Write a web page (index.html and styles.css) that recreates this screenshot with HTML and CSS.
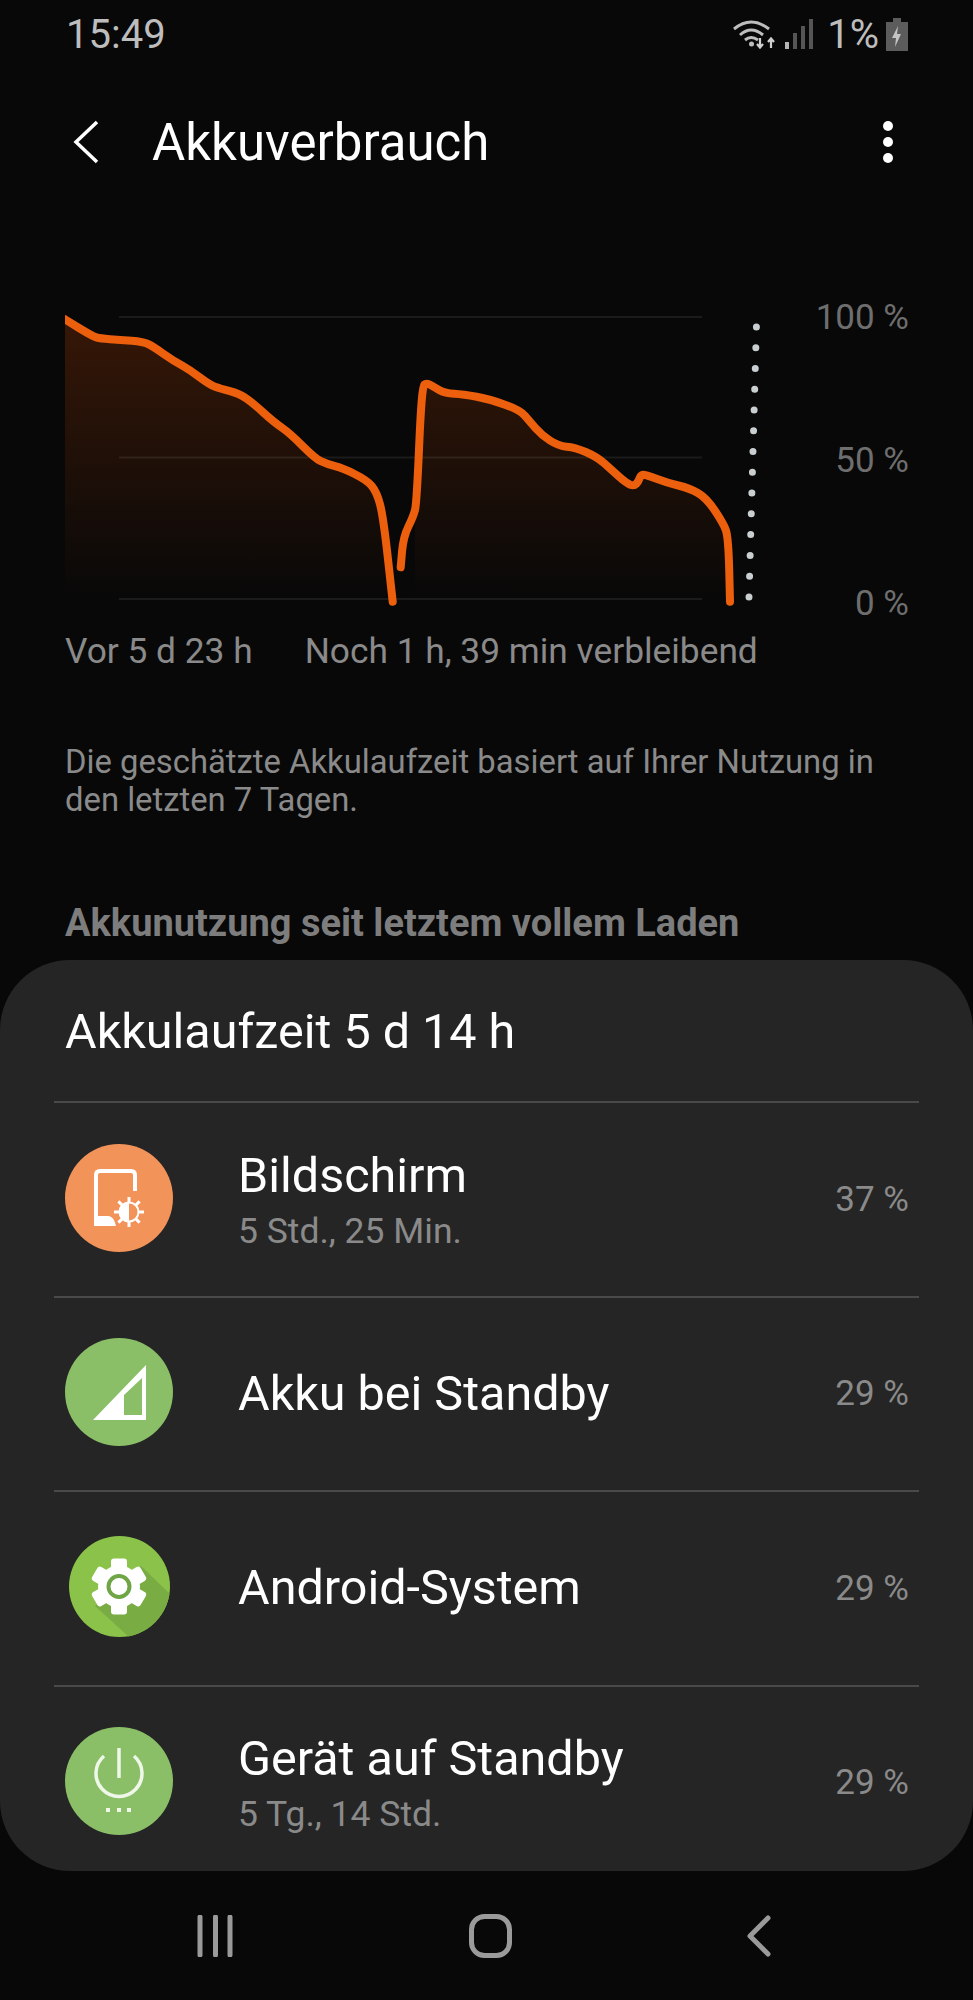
FILE: index.html
```html
<!DOCTYPE html>
<html lang="de">
<head>
<meta charset="UTF-8">
<title>Akkuverbrauch</title>
<link rel="stylesheet" href="styles.css">
</head>
<body>

<div class="statusbar">
  <span class="uhrzeit">15:49</span>
  <div class="status-rechts">
    <svg class="ic-wifi" width="46" height="32" viewBox="0 0 46 32">
      <g fill="none" stroke="#bdbdbd" stroke-width="3">
        <path d="M1 11 Q18 -3 36 11"/>
        <path d="M7 17 Q18 7 30 17"/>
        <path d="M12 22 Q18 17 25 22"/>
      </g>
      <circle cx="18.500" cy="26" r="2.500" fill="#bdbdbd"/>
      <path d="M27 20v9M24 26l3 3.500 3-3.500M38 30v-9M35 24l3-3.500 3 3.500" fill="none" stroke="#d0d0d0" stroke-width="2.200"/>
    </svg>
    <svg class="ic-signal" width="30" height="32" viewBox="0 0 30 32">
      <rect x="1" y="24" width="4" height="7" fill="#b5b5b5"/>
      <rect x="9" y="15" width="4" height="16" fill="#555"/>
      <rect x="17" y="8" width="4" height="23" fill="#555"/>
      <rect x="25" y="1" width="4" height="30" fill="#555"/>
    </svg>
    <span class="akku-text">1%</span>
    <svg class="ic-akku" width="22" height="33" viewBox="0 0 22 33">
      <path d="M7 0h8v4h7v29H0V4h7z" fill="#5c5c5c"/>
      <path d="M12 8l-6 12h4l-1 9 6-13h-4z" fill="#c4c4c4"/>
    </svg>
  </div>
</div>

<div class="toolbar">
  <svg class="zurueck" width="28" height="44" viewBox="0 0 28 44">
    <path d="M25 2 L4 22 L25 42" fill="none" stroke="#fff" stroke-width="3.500"/>
  </svg>
  <h1>Akkuverbrauch</h1>
  <div class="menu"><i></i><i></i><i></i></div>
</div>

<div class="grafik">
  <!-- viewBox usa as coordenadas da tela -->
  <svg class="kurve" width="700" height="320" viewBox="65 300 700 320">
    <defs>
      <linearGradient id="flaeche" gradientUnits="userSpaceOnUse" x1="0" y1="320" x2="0" y2="600">
        <stop offset="0" stop-color="#361707"/>
        <stop offset="1" stop-color="#080808"/>
      </linearGradient>
    </defs>
    <path fill="url(#flaeche)" d="M65 319.300L79 328Q93.300 336.700 96.700 337.500Q100 338.300 110 339.200Q120 340 131.700 340.800Q143.300 341.700 148.300 344.200Q153.300 346.700 163.300 353.700Q173.300 360.700 181.700 365.300Q190 370 200 377.500Q210 385 215 386.700Q220 388.300 230 391.200Q240 394 246.700 398.700Q253.300 403.300 263.300 412.500Q273.300 421.700 281.700 427.500Q290 433.300 302.500 445.800Q315 458.300 320.800 461.200Q326.700 464 335 466.200Q343.300 468.300 355 474.200Q366.700 480 371.700 485.800Q376.700 491.700 380 504.200Q383.300 516.700 388 559.200L392.700 601H65Z"/>
    <path fill="url(#flaeche)" d="M415 601V510Q416.700 503.300 419.200 445Q421.700 386.700 424.200 384.700Q426.700 382.700 430.800 385.200Q435 387.700 440 390.500Q445 393.300 454.200 393.800Q463.300 394.300 476.700 396.800Q490 399.300 505 404.700Q520 410 525 415.800Q530 421.700 535.800 428.300Q541.700 435 550 440.500Q558.300 446 566.700 446.700Q575 447.300 585.800 452Q596.700 456.700 604.200 463.300Q611.700 470 619.200 476.700Q626.700 483.300 630.300 484.700Q634 486 636.200 483.800Q638.300 481.700 639.500 478.300Q640.700 475 642.800 474.700Q645 474.300 655.800 478.500Q666.700 482.700 678.300 485.500Q690 488.300 698.300 493.300Q706.700 498.300 715 510.800Q723.300 523.300 725.800 530Q728.300 536.700 729.200 569L730 601Z"/>
    <path class="gitter" d="M119 317H702M119 457.500H702M119 599H702"/>
    <path class="linie" d="M65 319.300L79 328Q93.300 336.700 96.700 337.500Q100 338.300 110 339.200Q120 340 131.700 340.800Q143.300 341.700 148.300 344.200Q153.300 346.700 163.300 353.700Q173.300 360.700 181.700 365.300Q190 370 200 377.500Q210 385 215 386.700Q220 388.300 230 391.200Q240 394 246.700 398.700Q253.300 403.300 263.300 412.500Q273.300 421.700 281.700 427.500Q290 433.300 302.500 445.800Q315 458.300 320.800 461.200Q326.700 464 335 466.200Q343.300 468.300 355 474.200Q366.700 480 371.700 485.800Q376.700 491.700 380 504.200Q383.300 516.700 388 559.200L392.700 601.700"/>
    <path class="linie" d="M400.700 567.300L402 552Q403.300 536.700 408.300 526.700Q413.300 516.700 415 510Q416.700 503.300 419.200 445Q421.700 386.700 424.200 384.700Q426.700 382.700 430.800 385.200Q435 387.700 440 390.500Q445 393.300 454.200 393.800Q463.300 394.300 476.700 396.800Q490 399.300 505 404.700Q520 410 525 415.800Q530 421.700 535.800 428.300Q541.700 435 550 440.500Q558.300 446 566.700 446.700Q575 447.300 585.800 452Q596.700 456.700 604.200 463.300Q611.700 470 619.200 476.700Q626.700 483.300 630.300 484.700Q634 486 636.200 483.800Q638.300 481.700 639.500 478.300Q640.700 475 642.800 474.700Q645 474.300 655.800 478.500Q666.700 482.700 678.300 485.500Q690 488.300 698.300 493.300Q706.700 498.300 715 510.800Q723.300 523.300 725.800 530Q728.300 536.700 729.200 569L730 601.700"/>
    <line class="punkte" x1="756.400" y1="327" x2="749" y2="597"/>
  </svg>
  <div class="achse">
    <span>100 %</span>
    <span>50 %</span>
    <span>0 %</span>
  </div>
</div>

<div class="zeitraum">
  <span>Vor 5 d 23 h</span>
  <span>Noch 1 h, 39 min verbleibend</span>
</div>

<p class="hinweis">Die geschätzte Akkulaufzeit basiert auf Ihrer Nutzung in den letzten 7 Tagen.</p>

<h2 class="abschnitt">Akkunutzung seit letztem vollem Laden</h2>

<div class="karte">
  <div class="karte-titel">Akkulaufzeit 5 d 14 h</div>

  <div class="zeile">
    <svg class="icone orange" width="108" height="108" viewBox="0 0 108 108">
      <path d="M47 80H35q-4 0-4-4V31q0-4 4-4h31q4 0 4 4v16" fill="none" stroke="#fff" stroke-width="4"/>
      <path d="M29 72h15q5 1 7 10H29z" fill="#fff"/>
      <circle cx="64" cy="68" r="11.500" fill="#f2935a"/>
      <g stroke="#fff" stroke-width="3">
        <path d="M64 53v30M49 68h30M53.400 57.400l21.200 21.200M74.600 57.400 53.400 78.600"/>
      </g>
      <circle cx="64" cy="68" r="9.500" fill="#f2935a" stroke="#fff" stroke-width="2"/>
      <path d="M64 58.500a9.500 9.500 0 0 0 0 19z" fill="#fff"/>
    </svg>
    <div class="zeile-text">
      <div class="name">Bildschirm</div>
      <div class="dauer">5 Std., 25 Min.</div>
    </div>
    <span class="prozent">37 %</span>
  </div>

  <div class="zeile">
    <svg class="icone gruen" width="108" height="108" viewBox="0 0 108 108">
      <path fill-rule="evenodd" fill="#fff" d="M28 82 81 27V82ZM59 57V77H77V40Z"/>
    </svg>
    <div class="zeile-text">
      <div class="name">Akku bei Standby</div>
    </div>
    <span class="prozent">29 %</span>
  </div>

  <div class="zeile">
    <svg class="icone android" width="101" height="101" viewBox="0 0 101 101">
      <path d="M72 30 101 58V101H60L26 70Z" fill="#7aac44"/>
      <g transform="translate(50 50.500)" fill="#fff">
        <circle r="21"/>
        <rect x="-8" y="-28" width="16" height="14" rx="3"/>
        <rect x="-8" y="-28" width="16" height="14" rx="3" transform="rotate(60)"/>
        <rect x="-8" y="-28" width="16" height="14" rx="3" transform="rotate(120)"/>
        <rect x="-8" y="-28" width="16" height="14" rx="3" transform="rotate(180)"/>
        <rect x="-8" y="-28" width="16" height="14" rx="3" transform="rotate(240)"/>
        <rect x="-8" y="-28" width="16" height="14" rx="3" transform="rotate(300)"/>
        <circle r="10.500" fill="#fff" stroke="#6fa544" stroke-width="4"/>
      </g>
    </svg>
    <div class="zeile-text">
      <div class="name">Android-System</div>
    </div>
    <span class="prozent">29 %</span>
  </div>

  <div class="zeile">
    <svg class="icone gruen" width="108" height="108" viewBox="0 0 108 108">
      <path d="M54 21V51M39 29A23 23 0 1 0 69 29" fill="none" stroke="#eef7e8" stroke-width="3.500"/>
      <path d="M41 81h4v4h-4zM52 81h4v4h-4zM62 81h4v4h-4z" fill="#eef7e8"/>
    </svg>
    <div class="zeile-text">
      <div class="name">Gerät auf Standby</div>
      <div class="dauer">5 Tg., 14 Std.</div>
    </div>
    <span class="prozent">29 %</span>
  </div>
</div>

<div class="navbar">
  <svg width="36" height="42" viewBox="0 0 36 42">
    <path d="M3 2V40M18.500 2V40M33 2V40" stroke="#9a9a9a" stroke-width="5" stroke-linecap="round" fill="none"/>
  </svg>
  <svg width="43" height="44" viewBox="0 0 43 44">
    <rect x="2.500" y="2.500" width="38" height="39" rx="13" fill="none" stroke="#9a9a9a" stroke-width="5"/>
  </svg>
  <svg width="24" height="42" viewBox="0 0 24 42">
    <path d="M21 3 3 21 21 39" fill="none" stroke="#9a9a9a" stroke-width="5" stroke-linecap="round" stroke-linejoin="round"/>
  </svg>
</div>

</body>
</html>
```

FILE: styles.css
```css
* {
  box-sizing: border-box;
}

body {
  margin: 0;
  height: 2000px;
  background: #080808;
  color: #fff;
  font-family: Roboto, "Liberation Sans", sans-serif;
}

.statusbar {
  display: flex;
  justify-content: space-between;
  align-items: center;
  height: 66px;
  padding: 2px 65px 0 66px;
  color: #bdbdbd;
}
.uhrzeit {
  font-size: 40px;
}
.status-rechts {
  display: flex;
  align-items: center;
}
.ic-signal {
  margin-left: 5px;
}
.akku-text {
  margin-left: 13px;
  margin-right: 7px;
  font-size: 40px;
}

.toolbar {
  display: flex;
  align-items: center;
  height: 152px;
  padding: 0 66px 0 72px;
}
.toolbar h1 {
  flex: 1;
  margin: 0 0 0 52px;
  font-size: 51px;
  font-weight: 400;
}
.menu {
  display: flex;
  flex-direction: column;
  gap: 6px;
  margin-right: 14px;
}
.menu i {
  width: 10px;
  height: 10px;
  border-radius: 50%;
  background: #fff;
}

.grafik {
  display: flex;
  height: 320px;
  margin-top: 82px;
  padding-left: 65px;
}
.kurve {
  display: block;
}
.gitter {
  fill: none;
  stroke: rgba(255, 255, 255, 0.08);
  stroke-width: 2;
}
.linie {
  fill: none;
  stroke: #ec5f0d;
  stroke-width: 8;
  stroke-linecap: round;
  stroke-linejoin: round;
}
.punkte {
  stroke: #c9ced1;
  stroke-width: 7;
  stroke-linecap: round;
  stroke-dasharray: 0 20.770;
}
.achse {
  flex: 1;
  display: flex;
  flex-direction: column;
  justify-content: space-between;
  align-items: flex-end;
  height: 326px;
  margin-top: -2px;
  padding-right: 64px;
  font-size: 35px;
  line-height: 40px;
  color: #6e6e6e;
}

.zeitraum {
  display: flex;
  gap: 52px;
  margin-top: 11px;
  padding-left: 65px;
  font-size: 35.300px;
  line-height: 40px;
  color: #8a8a8a;
}

.hinweis {
  margin: 72px 0 0;
  padding: 0 65px;
  font-size: 32.800px;
  line-height: 38px;
  color: #8a8a8a;
}

.abschnitt {
  margin: 84px 0 0;
  padding-left: 65px;
  font-size: 38px;
  line-height: 40px;
  font-weight: 700;
  color: #7d7d7d;
}

.karte {
  margin-top: 17px;
  height: 911px;
  padding: 0 54px;
  overflow: hidden;
  background: #252525;
  border-radius: 70px;
}
.karte-titel {
  height: 141px;
  padding-left: 11px;
  font-size: 48.500px;
  line-height: 143px;
}
.zeile {
  display: flex;
  align-items: center;
  height: 194.500px;
  padding: 0 10px 0 11px;
  border-top: 2px solid #4a4a4a;
}
.icone {
  flex: none;
  margin-top: -3px;
  border-radius: 50%;
}
.orange {
  background: #f2935a;
}
.gruen {
  background: #8abf68;
}
.android {
  margin: -3px 3px 0 4px;
  background: #8bc34a;
}
.zeile-text {
  flex: 1;
  margin-left: 65px;
}
.name {
  font-size: 48.500px;
  line-height: 56px;
}
.dauer {
  margin-top: 7px;
  font-size: 35.500px;
  line-height: 40px;
  color: #8a8a8a;
}
.prozent {
  font-size: 35px;
  color: #8a8a8a;
}

.navbar {
  display: flex;
  justify-content: space-between;
  align-items: center;
  height: 130px;
  padding: 0 202px 0 197px;
}
```
